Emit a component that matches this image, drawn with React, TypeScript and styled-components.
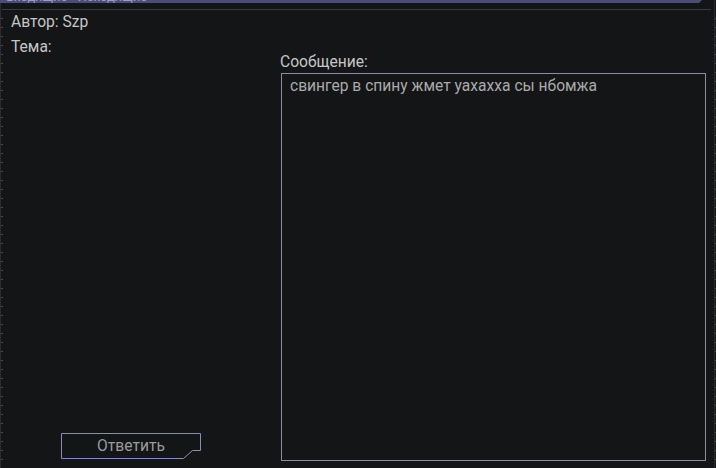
import React from "react";
import styled, { createGlobalStyle } from "styled-components";

const Global = createGlobalStyle`
  html, body { margin: 0; padding: 0; background: #141517; }
  body { font-family: Roboto, "Noto Sans", sans-serif; }
  #root { width: 716px; height: 468px; overflow: hidden; }
`;

const Frame = styled.div`
  display: flex;
  width: 716px;
  height: 468px;
  background: #141517;
  overflow: hidden;
`;

const Ruler = styled.div<{ $side: "left" | "right" }>`
  flex: 0 0 3px;
  height: 100%;
  background:
    linear-gradient(to right,
      ${(p) => (p.$side === "left" ? "#2c2d30 0 1px, transparent 1px" : "transparent 0 1px, #2c2d30 1px 2px, transparent 2px")}),
    repeating-linear-gradient(to bottom, transparent 0 8px, #4a4b50 8px 9px);
  background-size: 100% 100%, ${(p) => (p.$side === "left" ? "3px" : "2px")} 100%;
  background-repeat: no-repeat;
  background-position: 0 0, ${(p) => (p.$side === "left" ? "0" : "1px")} 10px;
`;

const Main = styled.div`
  flex: 1;
  display: flex;
  flex-direction: column;
  min-width: 0;
`;

const TitleBar = styled.div`
  height: 3px;
  width: 702px;
  margin-left: -3px;
  background: #4b4e72;
  clip-path: polygon(0 0, 100% 0, calc(100% - 3px) 100%, 0 100%);
  overflow: hidden;
`;

const TitleText = styled.div`
  font-size: 13px;
  color: #9a9cc0;
  line-height: 13px;
  margin-top: -10px;
  padding-left: 6px;
  white-space: nowrap;
`;

const Divider = styled.div`
  height: 1px;
  width: 709px;
  margin-left: -1px;
  margin-top: 6px;
  background: #3a3b3e;
`;

const Body = styled.div`
  flex: 1;
  display: grid;
  grid-template-columns: 272px 1fr;
  padding: 0 8px 7px 8px;
  min-height: 0;
`;

const LeftCol = styled.div`
  display: flex;
  flex-direction: column;
  padding-top: 0;
`;

const Label = styled.div`
  font-size: 15.6px;
  line-height: 25px;
  color: #c6c6c6;
`;

const ButtonRow = styled.div`
  margin-top: auto;
  padding-left: 50px;
  padding-bottom: 2px;
`;

const ReplyButton = styled.button`
  position: relative;
  width: 140px;
  height: 26px;
  padding: 0;
  border: none;
  background: transparent;
  font-family: Roboto, "Noto Sans", sans-serif;
  font-size: 15.6px;
  color: #9c9c9c;
  cursor: pointer;
  svg { position: absolute; left: 0; top: 0; }
  span { position: relative; display: block; line-height: 26px; }
`;

const RightCol = styled.div`
  display: flex;
  flex-direction: column;
  padding-top: 43px;
  min-height: 0;
`;

const MsgLabel = styled.div`
  font-size: 15.6px;
  line-height: 18px;
  color: #c6c6c6;
  margin-left: -3px;
`;

const MessageArea = styled.textarea`
  flex: 1;
  width: 425px;
  margin: 2px 0 0 -2px;
  box-sizing: border-box;
  background: #141517;
  border: 1px solid #8c8ea6;
  color: #aaaaaa;
  font-family: Roboto, "Noto Sans", sans-serif;
  font-size: 15.6px;
  line-height: 18px;
  padding: 3px 8px;
  resize: none;
  outline: none;
`;

export default function App() {
  return (
    <>
      <Global />
      <Frame>
        <Ruler $side="left" />
        <Main>
          <TitleBar>
            <TitleText>Входящие - Исходящие</TitleText>
          </TitleBar>
          <Divider />
          <Body>
            <LeftCol>
              <Label>Автор: Szp</Label>
              <Label>Тема:</Label>
              <ButtonRow>
                <ReplyButton type="button">
                  <svg width="140" height="26" viewBox="0 0 140 26">
                    <path
                      d="M0.5 0.5 H139.5 V17.5 H131.5 L122.5 25.5 H0.5 Z"
                      fill="none"
                      stroke="#8a8cb6"
                      strokeWidth="1"
                    />
                  </svg>
                  <span>Ответить</span>
                </ReplyButton>
              </ButtonRow>
            </LeftCol>
            <RightCol>
              <MsgLabel>Сообщение:</MsgLabel>
              <MessageArea readOnly defaultValue="свингер в спину жмет уахахха сы нбомжа" />
            </RightCol>
          </Body>
        </Main>
        <Ruler $side="right" />
      </Frame>
    </>
  );
}
